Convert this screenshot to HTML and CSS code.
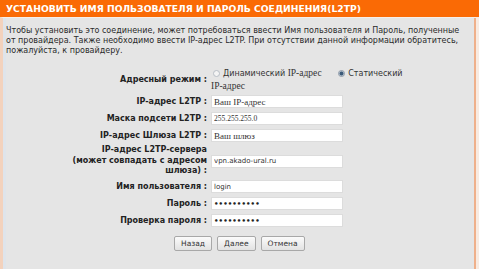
FILE: index.html
```html
<!DOCTYPE html>
<html lang="ru">
<head>
  <meta charset="UTF-8" />
  <meta name="viewport" content="width=device-width, initial-scale=1.0" />
  <link rel="stylesheet" href="styles.css">
  <title>L2TP</title>
</head>
<body>
  <!-- Section title -->
  <div class="head">УСТАНОВИТЬ ИМЯ ПОЛЬЗОВАТЕЛЯ И ПАРОЛЬ СОЕДИНЕНИЯ(L2TP)</div>

  <div class="frame">
    <div class="box">
      <p class="intro">Чтобы установить это соединение, может потребоваться ввести Имя пользователя и Пароль, полученные от провайдера. Также необходимо ввести IP-адрес L2TP. При отсутствии данной информации обратитесь, пожалуйста, к провайдеру.</p>

      <!-- Connection form -->
      <div class="form">
        <div class="lbl">Адресный режим :</div>
        <div class="val radios">
          <label class="radio"><span class="dot"></span>Динамический <span class="serif">IP-адрес</span></label>
          <label class="radio"><span class="dot on"></span>Статический <span class="serif">IP-адрес</span></label>
        </div>

        <div class="lbl">IP-адрес L2TP :</div>
        <div class="val"><input class="field serif" type="text" value="Ваш IP-адрес"></div>

        <div class="lbl">Маска подсети L2TP :</div>
        <div class="val"><input class="field serif small" type="text" value="255.255.255.0"></div>

        <div class="lbl">IP-адрес Шлюза L2TP :</div>
        <div class="val"><input class="field serif" type="text" value="Ваш шлюз"></div>

        <div class="lbl tall">IP-адрес L2TP-сервера<br>(может совпадать с адресом<br>шлюза) :</div>
        <div class="val"><input class="field" type="text" value="vpn.akado-ural.ru"></div>

        <div class="lbl">Имя пользователя :</div>
        <div class="val"><input class="field" type="text" value="login"></div>

        <div class="lbl">Пароль :</div>
        <div class="val"><input class="field dots" type="text" value="••••••••••"></div>

        <div class="lbl">Проверка пароля :</div>
        <div class="val"><input class="field dots" type="text" value="••••••••••"></div>
      </div>

      <div class="buttons">
        <button class="btn">Назад</button>
        <button class="btn">Далее</button>
        <button class="btn">Отмена</button>
      </div>
    </div>
  </div>
</body>
</html>
```

FILE: styles.css
```css
/* Reset */
* {
  margin: 0;
  padding: 0;
  box-sizing: border-box;
}

body {
  font-family: "DejaVu Sans", Verdana, sans-serif;
  background-color: #f8ebe2;
  color: #222;
  height: 269px;
  overflow: hidden;
}

/* Orange title bar */
.head {
  height: 17px;
  line-height: 18px;
  padding-left: 6px;
  background-color: #fa6a05;
  color: #fff;
  font-size: 9.2px;
  font-weight: bold;
  white-space: nowrap;
}

/* Page frame edges */
.frame {
  height: 252px;
  margin-right: 3px;
  border-left: 3px solid #f3d2bd;
  border-top: 1px solid #f6efe9;
}

.box {
  height: 100%;
  background-color: #e5e5e5;
  border-left: 3px solid #dfe4ea;
  border-right: 2px solid #efb08a;
}

/* Intro text */
.intro {
  padding: 8px 10px 0 0;
  font-size: 8px;
  line-height: 10px;
  color: #2a2a2a;
}

/* Form grid */
.form {
  display: grid;
  grid-template-columns: 201px 200px;
  column-gap: 4px;
  margin-top: 9px;
}

.lbl {
  font-weight: bold;
  font-size: 8px;
  text-align: right;
  color: #222;
  white-space: nowrap;
  min-height: 17px;
  display: flex;
  align-items: center;
  justify-content: flex-end;
}

.lbl.tall {
  line-height: 10.7px;
  min-height: 34px;
}

.val {
  display: flex;
  align-items: center;
  min-height: 17px;
}

.radios {
  display: block;
  font-size: 8px;
  line-height: 13px;
  color: #333;
  min-height: 26px;
  padding-top: 2px;
}

.radio {
  margin-right: 12px;
}

.radios .serif {
  font-size: 9.5px;
  white-space: nowrap;
}

.dot {
  display: inline-block;
  width: 7px;
  height: 7px;
  border-radius: 50%;
  border: 1px solid #b8bec6;
  background: #f4f4f4;
  margin: 0 3px 0 2px;
  vertical-align: -1px;
}

.dot.on {
  background: radial-gradient(circle, #3c5a78 0, #3c5a78 1.6px, #c9d3de 2.4px, #f0f0f0 3.5px);
  border-color: #8e9aa8;
}

.serif {
  font-family: "Liberation Serif", "Times New Roman", serif;
}

/* Text fields */
.field {
  width: 132px;
  height: 13px;
  border: 1px solid #dcdcdc;
  background: #fff;
  padding: 0 2px;
  font-family: "DejaVu Sans", Verdana, sans-serif;
  font-size: 7px;
  color: #333;
  outline: none;
}

.field.serif {
  font-family: "Liberation Serif", "Times New Roman", serif;
  font-size: 9px;
}

.field.serif.small {
  font-size: 7.5px;
}

.field.dots {
  font-size: 7px;
  font-weight: bold;
  letter-spacing: 0.1px;
  color: #222;
}

/* Buttons */
.buttons {
  display: flex;
  gap: 5px;
  padding-left: 168px;
  margin-top: 7px;
}

.btn {
  height: 15px;
  padding: 0 6px;
  font-family: "DejaVu Sans", Verdana, sans-serif;
  font-size: 7.5px;
  color: #333;
  background: linear-gradient(#fbfbfb, #e2e2e2);
  border: 1px solid #a8a8a8;
  border-radius: 2px;
}
```
